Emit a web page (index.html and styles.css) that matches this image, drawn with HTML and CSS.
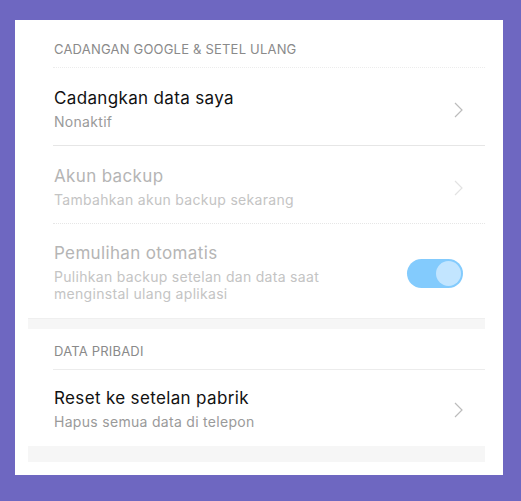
FILE: index.html
```html
<!DOCTYPE html>
<html lang="id">

<head>
    <meta charset="UTF-8">
    <title>Cadangan &amp; setel ulang</title>
    <link rel="stylesheet" href="styles.css">
</head>

<body>
    <div class="card">
        <div class="list">
            <div class="header header-first">CADANGAN GOOGLE &amp; SETEL ULANG</div>

            <div class="row">
                <div class="text">
                    <div class="title">Cadangkan data saya</div>
                    <div class="sub">Nonaktif</div>
                </div>
                <svg class="chevron" width="9" height="16" viewBox="0 0 9 16">
                    <path d="M1 1 L8 8 L1 15" fill="none" stroke="#bcbcbc" stroke-width="1.2" />
                </svg>
            </div>

            <div class="row row-dotted disabled">
                <div class="text">
                    <div class="title">Akun backup</div>
                    <div class="sub">Tambahkan akun backup sekarang</div>
                </div>
                <svg class="chevron" width="9" height="16" viewBox="0 0 9 16">
                    <path d="M1 1 L8 8 L1 15" fill="none" stroke="#e2e2e2" stroke-width="1.2" />
                </svg>
            </div>

            <div class="row row-toggle disabled">
                <div class="text">
                    <div class="title">Pemulihan otomatis</div>
                    <div class="sub sub-wrap">Pulihkan backup setelan dan data saat menginstal ulang aplikasi</div>
                </div>
                <div class="toggle"><span class="knob"></span></div>
            </div>

            <div class="band"></div>

            <div class="header">DATA PRIBADI</div>

            <div class="row row-end">
                <div class="text">
                    <div class="title">Reset ke setelan pabrik</div>
                    <div class="sub">Hapus semua data di telepon</div>
                </div>
                <svg class="chevron" width="9" height="16" viewBox="0 0 9 16">
                    <path d="M1 1 L8 8 L1 15" fill="none" stroke="#bcbcbc" stroke-width="1.2" />
                </svg>
            </div>

            <div class="band band-bottom"></div>
        </div>
    </div>
</body>

</html>
```

FILE: styles.css
```css
body {
    margin: 0;
    background-color: #6e67c1;
    font-family: Inter, Roboto, sans-serif;
}

.card {
    margin: 20px 18px 26px 15px;
    padding: 7px 18px 13px 13px;
    background-color: #fff;
}

.header {
    margin-left: 25px;
    padding: 14px 0 10px 1px;
    font-size: 13px;
    line-height: 16px;
    letter-spacing: 0.2px;
    color: #8a8a8a;
    border-bottom: 1px solid #ececec;
}

.header-first {
    border-bottom: 1px dotted #ececec;
}

.row {
    display: flex;
    align-items: center;
    margin-left: 25px;
    padding: 20px 22px 14px 1px;
    border-bottom: 1px solid #e6e6e6;
}

.row-dotted {
    border-bottom: 1px dotted #e6e6e6;
}

.row-toggle {
    border-bottom: none;
    padding-top: 19px;
    padding-bottom: 16px;
}

.row-end {
    border-bottom: none;
    padding-top: 18px;
    padding-bottom: 15px;
}

.text {
    flex: 1;
}

.title {
    font-size: 17px;
    line-height: 21px;
    letter-spacing: 0.35px;
    color: #111;
}

.sub {
    margin-top: 4px;
    font-size: 14px;
    line-height: 18px;
    letter-spacing: 0.3px;
    color: #9a9a9a;
}

.sub-wrap {
    max-width: 300px;
    line-height: 17px;
}

.disabled .title {
    color: #b5b5b5;
}

.disabled .sub {
    color: #c4c4c4;
}

.chevron {
    display: block;
}

.toggle {
    display: flex;
    justify-content: flex-end;
    align-items: center;
    width: 56px;
    height: 29px;
    padding: 0 2px;
    box-sizing: border-box;
    border-radius: 15px;
    background-color: #83cbfd;
    margin-top: 2px;
}

.knob {
    width: 25px;
    height: 25px;
    border-radius: 50%;
    background-color: #c2e5ff;
}

.band {
    height: 10px;
    background-color: #f6f6f6;
    border-top: 1px solid #efefef;
}

.band-bottom {
    height: 16px;
    border-top: none;
}
```
